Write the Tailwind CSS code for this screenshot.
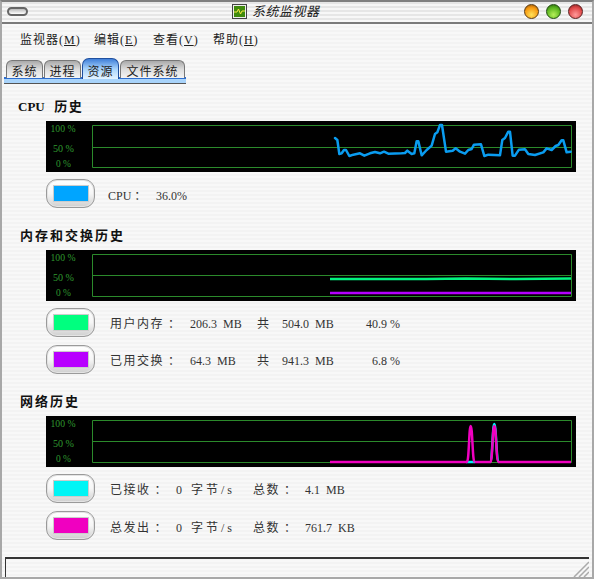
<!DOCTYPE html>
<html lang="zh-CN">
<head>
    <meta charset="UTF-8">
    <title>系统监视器</title>
    <script src="https://cdn.jsdelivr.net/npm/@tailwindcss/browser@4"></script>
</head>
<body class="bg-white">
<div class="relative w-[594px] h-[579px] flex flex-col overflow-hidden border-l-2 border-r-2 border-b-2 border-t-2 border-l-[#a8a8a8] border-r-[#a8a8a8] border-b-[#a8a8a8] border-t-[#808080] text-[12px] text-[#333] font-['Liberation_Serif','Noto_Sans_CJK_TC','Noto_Sans_CJK_SC',serif] bg-[repeating-linear-gradient(180deg,#f3f3f3_0,#f3f3f3_2px,#f8f8f8_2px,#f8f8f8_4px)]">

    <!-- title bar -->
    <div class="h-[19px] shrink-0 flex items-center border-b-2 border-[#7a7a7a] -mb-px box-content pb-px bg-[repeating-linear-gradient(180deg,#e6e6e6_0,#e6e6e6_2px,#f7f7f7_2px,#f7f7f7_4px)]">
        <div class="ml-[5px] w-[21px] h-[9px] rounded-full border-2 border-[#666] bg-gradient-to-b from-[#bbb] to-[#fff]"></div>
        <svg class="ml-[204px] shrink-0" width="15" height="15" viewBox="0 0 15 15">
            <rect x="0.5" y="0.5" width="14" height="14" fill="#eee" stroke="#444"/>
            <rect x="2" y="2" width="11" height="11" fill="#3f8a0c"/>
            <path d="M2 8h3l1.500-3 2 5 1.500-3h3" fill="none" stroke="#f5e640" stroke-width="1"/>
        </svg>
        <span class="ml-[5px] text-[13px] italic tracking-[0.500px] text-[#222]">系统监视器</span>
        <div class="ml-auto mr-[9px] flex gap-[7px]">
            <div class="w-[15px] h-[15px] rounded-full border border-[#5a3a10] bg-[radial-gradient(circle_at_50%_75%,#ffe25a,#f79a10_60%,#8a4a08)]"></div>
            <div class="w-[15px] h-[15px] rounded-full border border-[#1f4a0f] bg-[radial-gradient(circle_at_50%_75%,#b6ef5a,#5bb51f_60%,#245c0c)]"></div>
            <div class="w-[15px] h-[15px] rounded-full border border-[#5a1f1f] bg-[radial-gradient(circle_at_50%_75%,#ff9a9a,#e04848_60%,#7a1c1c)]"></div>
        </div>
    </div>

    <!-- menu bar -->
    <div class="h-[33px] mb-[2px] shrink-0 flex items-center pl-[18px] text-[#222] tracking-[1px]">
        <span class="w-[74px]">监视器(<u>M</u>)</span>
        <span class="w-[59px]">编辑(<u>E</u>)</span>
        <span class="w-[60px]">查看(<u>V</u>)</span>
        <span>帮助(<u>H</u>)</span>
    </div>

    <!-- tabs -->
    <div class="shrink-0 ml-[2px] w-[182px] h-[26px] border-b border-[#555]">
        <div class="h-[25px] flex items-end bg-[linear-gradient(180deg,transparent_0,transparent_19px,#2f6fd0_19px,#2f6fd0_21px,#a9d4fb_21px,#a9d4fb_25px)]">
            <div class="ml-[2px] w-[37px] h-[18px] mb-[5px] leading-[12px] flex items-end justify-center rounded-t-[6px] border border-b-0 border-[#777] bg-gradient-to-b from-[#aaa] via-[#ddd] to-[#f4f4f4] tracking-[1px] text-[#222]">系统</div>
            <div class="ml-px w-[37px] h-[18px] mb-[5px] leading-[12px] flex items-end justify-center rounded-t-[6px] border border-b-0 border-[#777] bg-gradient-to-b from-[#aaa] via-[#ddd] to-[#f4f4f4] tracking-[1px] text-[#222]">进程</div>
            <div class="ml-px w-[37px] h-[21px] mb-[4px] pb-[1px] leading-[12px] flex items-end justify-center rounded-t-[7px] border border-b-0 border-[#1f4f9f] bg-gradient-to-b from-[#3f7fd8] via-[#a9d4fb] to-[#e4f3ff] tracking-[1px] text-[#222]">资源</div>
            <div class="ml-px w-[65px] h-[18px] mb-[5px] leading-[12px] flex items-end justify-center rounded-t-[6px] border border-b-0 border-[#777] bg-gradient-to-b from-[#aaa] via-[#ddd] to-[#f4f4f4] tracking-[1px] text-[#222]">文件系统</div>
        </div>
    </div>

    <!-- CPU -->
    <div class="h-[16px] mt-[14px] ml-[16px] pt-[2px] flex items-center font-bold text-[13px] tracking-[1.500px] text-[#111] shrink-0"><span class="tracking-[0px]">CPU</span>&nbsp;&nbsp;历史</div>
    <svg class="mt-[7px] ml-[44px] shrink-0 bg-black" width="530" height="51" viewBox="0 0 530 51">
        <g fill="#2f9a2f" font-size="11" font-family="Liberation Serif"><text x="4.500" y="11" textLength="25" lengthAdjust="spacingAndGlyphs">100 %</text><text x="7" y="31" textLength="21" lengthAdjust="spacingAndGlyphs">50 %</text><text x="10" y="46" textLength="15" lengthAdjust="spacingAndGlyphs">0 %</text></g>
        <path d="M46.500 4.500H525.500V46.500H46.500ZM46.500 26.500H525.500" fill="none" stroke="#2b8a2b"/>
        <polyline transform="translate(274 -7) scale(0.3333)" fill="none" stroke="#0a9cf0" stroke-width="7.500" stroke-linejoin="round" stroke-linecap="round" points="45,72 52,78 58,120 65,118 72,108 78,108 88,126 100,122 120,118 133,125 150,118 165,114 180,118 192,113 205,119 245,118 255,117 262,110 275,120 283,118 290,82 295,82 305,124 320,108 335,95 345,60 352,55 360,33 366,33 378,113 398,110 407,103 420,113 435,119 445,108 455,105 462,92 483,91 493,126 505,122 540,124 547,78 555,72 565,53 570,53 578,125 585,125 597,107 615,106 625,120 645,123 670,115 680,103 695,108 707,96 715,93 725,79 730,79 740,115 752,113"/>
    </svg>
    <div class="mt-[7px] ml-[44px] h-[29px] flex items-center shrink-0">
        <div class="w-[49px] h-[29px] flex items-center justify-center rounded-[11px] border border-[#9a9a9a] bg-gradient-to-b from-[#fff] via-[#f6f6f6] to-[#cfcfcf] shadow-[inset_0_0_0_1px_#e4e4e4]">
            <div class="w-[36px] h-[17px] bg-[#00a5ff] border border-[#ccc]"></div>
        </div>
        <div class="flex items-center pt-[4px]">
            <span class="ml-[13px] w-[48px]">CPU<span class="ml-[3px]">：</span></span>
            <span>36.0%</span>
        </div>
    </div>

    <!-- memory -->
    <div class="h-[16px] mt-[19px] ml-[18px] pt-[2px] flex items-center font-bold text-[13px] tracking-[2px] text-[#111] shrink-0">内存和交换历史</div>
    <svg class="mt-[7px] ml-[44px] shrink-0 bg-black" width="530" height="51" viewBox="0 0 530 51">
        <g fill="#2f9a2f" font-size="11" font-family="Liberation Serif"><text x="4.500" y="11" textLength="25" lengthAdjust="spacingAndGlyphs">100 %</text><text x="7" y="31" textLength="21" lengthAdjust="spacingAndGlyphs">50 %</text><text x="10" y="46" textLength="15" lengthAdjust="spacingAndGlyphs">0 %</text></g>
        <path d="M46.500 4.500H525.500V46.500H46.500ZM46.500 25.500H525.500" fill="none" stroke="#2b8a2b"/>
        <path d="M284 29H380L420 28.500L470 29L525 28.500" fill="none" stroke="#00f57f" stroke-width="2.500"/>
        <path d="M284 43H525" fill="none" stroke="#b400ff" stroke-width="2.500"/>
    </svg>
    <div class="mt-[7px] ml-[44px] h-[29px] flex items-center shrink-0">
        <div class="w-[49px] h-[29px] flex items-center justify-center rounded-[11px] border border-[#9a9a9a] bg-gradient-to-b from-[#fff] via-[#f6f6f6] to-[#cfcfcf] shadow-[inset_0_0_0_1px_#e4e4e4]">
            <div class="w-[36px] h-[17px] bg-[#00ff7f] border border-[#ccc]"></div>
        </div>
        <div class="flex items-center pt-[3px]">
            <span class="ml-[15px] w-[80px] tracking-[1.500px]">用户内存<span class="ml-[4px]">：</span></span>
            <span class="w-[67px] whitespace-pre">206.3  MB</span>
            <span class="w-[25px]">共</span>
            <span class="w-[78px] whitespace-pre">504.0  MB</span>
            <span class="w-[40px] text-right whitespace-pre">40.9 %</span>
        </div>
    </div>
    <div class="mt-[8px] ml-[44px] h-[29px] flex items-center shrink-0">
        <div class="w-[49px] h-[29px] flex items-center justify-center rounded-[11px] border border-[#9a9a9a] bg-gradient-to-b from-[#fff] via-[#f6f6f6] to-[#cfcfcf] shadow-[inset_0_0_0_1px_#e4e4e4]">
            <div class="w-[36px] h-[17px] bg-[#b800ff] border border-[#ccc]"></div>
        </div>
        <div class="flex items-center pt-[3px]">
            <span class="ml-[15px] w-[80px] tracking-[1.500px]">已用交换<span class="ml-[4px]">：</span></span>
            <span class="w-[67px] whitespace-pre">64.3  MB</span>
            <span class="w-[25px]">共</span>
            <span class="w-[78px] whitespace-pre">941.3  MB</span>
            <span class="w-[40px] text-right whitespace-pre">6.8 %</span>
        </div>
    </div>

    <!-- network -->
    <div class="h-[16px] mt-[19px] ml-[18px] pt-[2px] flex items-center font-bold text-[13px] tracking-[2px] text-[#111] shrink-0">网络历史</div>
    <svg class="mt-[7px] ml-[44px] shrink-0 bg-black" width="530" height="51" viewBox="0 0 530 51">
        <g fill="#2f9a2f" font-size="11" font-family="Liberation Serif"><text x="4.500" y="11" textLength="25" lengthAdjust="spacingAndGlyphs">100 %</text><text x="7" y="31" textLength="21" lengthAdjust="spacingAndGlyphs">50 %</text><text x="10" y="46" textLength="15" lengthAdjust="spacingAndGlyphs">0 %</text></g>
        <path d="M46.500 4.500H525.500V46.500H46.500ZM46.500 25.500H525.500" fill="none" stroke="#2b8a2b"/>
        <path d="M420 46H429M444 46C446.500 46 446.500 8 448.300 8C450.200 8 450.200 46 453 46" fill="none" stroke="#00f5f5" stroke-width="2.500"/>
        <path d="M284 46H421C423 46 423 10 424.700 10C426.500 10 426.500 46 428.500 46M429 46H444.500C446.500 46 446.500 10 448.300 10C450.200 10 450.200 46 452.500 46H525" fill="none" stroke="#f000c0" stroke-width="2.500"/>
    </svg>
    <div class="mt-[7px] ml-[44px] h-[29px] flex items-center shrink-0">
        <div class="w-[49px] h-[29px] flex items-center justify-center rounded-[11px] border border-[#9a9a9a] bg-gradient-to-b from-[#fff] via-[#f6f6f6] to-[#cfcfcf] shadow-[inset_0_0_0_1px_#e4e4e4]">
            <div class="w-[36px] h-[17px] bg-[#00f5f5] border border-[#ccc]"></div>
        </div>
        <div class="flex items-center pt-[3px]">
            <span class="ml-[15px] w-[66px] tracking-[1.500px]">已接收<span class="ml-[4px]">：</span></span>
            <span class="w-[15px]">0</span>
            <span class="w-[62px] tracking-[3px]">字节/s</span>
            <span class="w-[52px] tracking-[1.500px]">总数<span class="ml-[4px]">：</span></span>
            <span class="whitespace-pre">4.1  MB</span>
        </div>
    </div>
    <div class="mt-[8px] ml-[44px] h-[29px] flex items-center shrink-0">
        <div class="w-[49px] h-[29px] flex items-center justify-center rounded-[11px] border border-[#9a9a9a] bg-gradient-to-b from-[#fff] via-[#f6f6f6] to-[#cfcfcf] shadow-[inset_0_0_0_1px_#e4e4e4]">
            <div class="w-[36px] h-[17px] bg-[#f000c0] border border-[#ccc]"></div>
        </div>
        <div class="flex items-center pt-[4px]">
            <span class="ml-[15px] w-[66px] tracking-[1.500px]">总发出<span class="ml-[4px]">：</span></span>
            <span class="w-[15px]">0</span>
            <span class="w-[62px] tracking-[3px]">字节/s</span>
            <span class="w-[52px] tracking-[1.500px]">总数<span class="ml-[4px]">：</span></span>
            <span class="whitespace-pre">761.7  KB</span>
        </div>
    </div>

    <!-- status bar -->
    <div class="mt-auto ml-[3px] mr-[3px] h-[20px] shrink-0 relative border-t-2 border-l border-t-[#333] border-l-[#333]">
        <svg class="absolute right-0 bottom-0" width="16" height="16" viewBox="0 0 16 16">
            <path d="M1 16L16 1M6 16L16 6M11 16L16 11" stroke="#aaa" stroke-width="1.500" fill="none"/>
        </svg>
    </div>
</div>
</body>
</html>
